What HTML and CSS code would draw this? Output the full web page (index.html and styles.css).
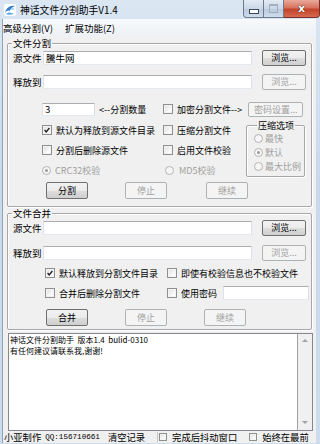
FILE: index.html
```html
<!DOCTYPE html>
<html lang="zh-CN">
<head>
    <meta charset="UTF-8">
    <title>神话文件分割助手V1.4</title>
    <link rel="stylesheet" href="styles.css">
</head>
<body>
<div class="window">
    <div class="titlebar">
        <svg class="app-icon" width="12" height="12" viewBox="0 0 12 12">
            <path d="M1 9 C2 4 6 1 11 2 C8 3 6 5 6 7 C4 6 2 7 1 9 Z" fill="#2f7fd0"/>
            <path d="M2 10 C4 8 7 8 10 10 C7 11 4 11 2 10 Z" fill="#5aa8ea"/>
            <circle cx="8.5" cy="5" r="1.3" fill="#9fd0f5"/>
        </svg>
        <span class="title">神话文件分割助手V1.4</span>
        <div class="caption">
            <span class="cbtn min"><i></i></span>
            <span class="cbtn max"><i></i></span>
            <span class="cbtn close">x</span>
        </div>
    </div>

    <div class="client">
        <div class="menubar">
            <span>高级分割(V)</span>
            <span>扩展功能(Z)</span>
        </div>

        <!-- 文件分割 -->
        <fieldset class="group split">
            <legend>文件分割</legend>
            <div class="row path">
                <span class="lbl">源文件</span>
                <div class="edit wide">騰牛网</div>
                <span class="btn browse">浏览...</span>
            </div>
            <div class="row path gap7">
                <span class="lbl">释放到</span>
                <div class="edit wide"></div>
                <span class="btn browse off">浏览...</span>
            </div>
            <div class="row count">
                <div class="left">
                    <div class="edit spin">3</div>
                    <span class="hint">&lt;--分割数量</span>
                </div>
                <span class="chk"></span><span class="txt">加密分割文件--&gt;</span>
                <span class="btn pwd off">密码设置...</span>
            </div>
            <div class="opts">
                <div class="col leftcol">
                    <div class="opt"><span class="chk on"><svg viewBox="0 0 10 10"><path d="M2 5 L4 7.5 L8 2.5" fill="none" stroke="#1c1c1c" stroke-width="1.6"/></svg></span><span class="txt">默认为释放到源文件目录</span></div>
                    <div class="opt"><span class="chk"></span><span class="txt">分割后删除源文件</span></div>
                    <div class="opt off"><span class="radio on"></span><span class="txt">CRC32校验</span></div>
                </div>
                <div class="col midcol">
                    <div class="opt"><span class="chk"></span><span class="txt">压缩分割文件</span></div>
                    <div class="opt"><span class="chk"></span><span class="txt">启用文件校验</span></div>
                    <div class="opt off"><span class="radio"></span><span class="txt">MD5校验</span></div>
                </div>
                <fieldset class="group zip">
                    <legend>压缩选项</legend>
                    <div class="ropt"><span class="radio"></span><span class="txt">最快</span></div>
                    <div class="ropt"><span class="radio on"></span><span class="txt">默认</span></div>
                    <div class="ropt"><span class="radio"></span><span class="txt">最大比例</span></div>
                </fieldset>
            </div>
            <div class="row actions">
                <span class="btn act">分割</span>
                <span class="btn act off stop">停止</span>
                <span class="btn act off cont">继续</span>
            </div>
        </fieldset>

        <!-- 文件合并 -->
        <fieldset class="group merge">
            <legend>文件合并</legend>
            <div class="row path">
                <span class="lbl">源文件</span>
                <div class="edit wide"></div>
                <span class="btn browse">浏览...</span>
            </div>
            <div class="row path gap8">
                <span class="lbl">释放到</span>
                <div class="edit wide"></div>
                <span class="btn browse off">浏览...</span>
            </div>
            <div class="row mopt first">
                <div class="mleft"><span class="chk on"><svg viewBox="0 0 10 10"><path d="M2 5 L4 7.5 L8 2.5" fill="none" stroke="#1c1c1c" stroke-width="1.6"/></svg></span><span class="txt">默认释放到分割文件目录</span></div>
                <span class="chk"></span><span class="txt">即使有校验信息也不校验文件</span>
            </div>
            <div class="row mopt">
                <div class="mleft"><span class="chk"></span><span class="txt">合并后删除分割文件</span></div>
                <span class="chk"></span><span class="txt">使用密码</span>
                <div class="edit pass"></div>
            </div>
            <div class="row actions m">
                <span class="btn act">合并</span>
                <span class="btn act off stop">停止</span>
                <span class="btn act off cont2">继续</span>
            </div>
        </fieldset>

        <div class="log">
            <div class="log-text">
                <div>神话文件分割助手&nbsp; 版本1.4&nbsp; bulid-0310</div>
                <div>有任何建议请联系我,谢谢!</div>
            </div>
            <div class="vscroll">
                <span class="arr up"></span>
                <span class="arr down"></span>
            </div>
        </div>

        <div class="statusbar">
            <span class="st-name">小亚制作</span>
            <span class="st-qq">QQ:156710661</span>
            <span class="st-clear">清空记录</span>
            <span class="st-sep"></span>
            <span class="chk"></span><span class="txt">完成后抖动窗口</span>
            <span class="chk st-top"></span><span class="txt">始终在最前</span>
        </div>
    </div>
</div>
</body>
</html>
```

FILE: styles.css
```css
body {
    margin: 0;
    font-family: "Noto Sans CJK SC", "Noto Sans", sans-serif;
    font-size: 9px;
    color: #000;
}
.window {
    width: 320px;
    height: 444px;
    box-sizing: border-box;
    padding: 0 4px 4px 2px;
    background: linear-gradient(180deg, #dae6f2 0%, #c9d9ea 40%, #cddcec 100%);
    display: flex;
    flex-direction: column;
    overflow: hidden;
}
.titlebar {
    height: 19px;
    flex: none;
    display: flex;
    align-items: center;
    position: relative;
}
.app-icon {
    margin-left: 2px;
    background: #fff;
    border-radius: 2px;
}
.title {
    margin-left: 4px;
    font-size: 9.8px;
    line-height: 12px;
    color: #000;
}
.caption {
    position: absolute;
    right: -4px;
    top: 0;
    display: flex;
}
.cbtn {
    height: 18px;
    box-sizing: border-box;
    border: 1px solid #6b7a8f;
    border-top: none;
    display: flex;
    align-items: center;
    justify-content: center;
    background: linear-gradient(180deg, #e3ebf4 0%, #cbd8e7 50%, #b8c9dc 51%, #cfdceb 100%);
}
.cbtn.min {
    width: 21px;
    border-radius: 0 0 0 4px;
}
.cbtn.min i {
    width: 8px;
    height: 3px;
    margin-top: 5px;
    background: #fff;
    border: 1px solid #3b4a5e;
}
.cbtn.max {
    width: 20px;
    border-left: none;
}
.cbtn.max i {
    width: 7px;
    height: 6px;
    border: 1px solid #8d9bb0;
    border-top-width: 2px;
    opacity: 0.7;
}
.cbtn.close {
    width: 36px;
    border-left: none;
    border-color: #7a2f2a;
    border-radius: 0 0 4px 0;
    background: linear-gradient(180deg, #e9a99c 0%, #d7735f 45%, #c2432c 55%, #d66a4e 100%);
    color: #fff;
    font-family: "DejaVu Sans", sans-serif;
    font-weight: bold;
    font-size: 11px;
    text-shadow: 0 0 1px #3a0d08, 0 0 1px #3a0d08;
}
.client {
    flex: 1;
    background: #f0f0f0;
    border-left: 1px solid #8fa2b8;
    display: flex;
    flex-direction: column;
}
.menubar {
    height: 17px;
    flex: none;
    display: flex;
    align-items: center;
    gap: 12px;
    font-size: 9.5px;
    background: linear-gradient(180deg, #f7f9fb 0%, #eef1f5 100%);
}
.group {
    margin: 2px 4px 0 4px;
    padding: 0;
    border: 1px solid #a7a7a7;
    border-radius: 2px;
    box-shadow: 1px 1px 0 #fff, inset 1px 1px 0 #fff;
    min-width: 0;
}
.group legend {
    padding: 0 1px;
    margin-left: 4px;
    line-height: 11px;
    font-size: 9.5px;
}
.row {
    display: flex;
    align-items: center;
    height: 17px;
}
.row.path {
    padding-left: 5px;
}
.gap7 { margin-top: 7px; }
.gap8 { margin-top: 8px; }
.lbl {
    width: 30px;
    font-size: 9.5px;
}
.edit {
    box-sizing: border-box;
    height: 14px;
    background: #fff;
    border: 1px solid #abadb3;
    border-color: #abadb3 #dbdfe6 #e3e9ef #e2e3ea;
    line-height: 12px;
    padding-left: 2px;
    font-size: 9.5px;
}
.edit.wide {
    width: 209px;
}
.btn {
    box-sizing: border-box;
    display: flex;
    align-items: center;
    justify-content: center;
    height: 16px;
    border: 1px solid #707070;
    border-radius: 2px;
    background: linear-gradient(180deg, #f2f2f2 0%, #ebebeb 50%, #dddddd 51%, #cfcfcf 100%);
}
.btn.off {
    border-color: #adb2b5;
    background: #f4f4f4;
    color: #a0a0a0;
}
.btn.browse {
    width: 44px;
    margin-left: 10px;
}
.row.count {
    margin-top: 11px;
    height: 16px;
}
.left {
    width: 155px;
    display: flex;
    align-items: center;
    padding-left: 34px;
    box-sizing: border-box;
}
.edit.spin {
    width: 53px;
    height: 13px;
    line-height: 11px;
}
.hint {
    margin-left: 4px;
}
.chk {
    box-sizing: border-box;
    width: 10px;
    height: 10px;
    flex: none;
    border: 1px solid #8e8f8f;
    background: linear-gradient(135deg, #dcdcdc 0%, #fbfbfb 70%);
    box-shadow: inset 0 0 0 1px #f4f4f4;
    display: flex;
}
.chk svg {
    width: 8px;
    height: 8px;
}
.txt {
    margin-left: 4px;
    white-space: nowrap;
}
.btn.pwd {
    width: 55px;
    margin-left: 6px;
    height: 15px;
}
.opts {
    display: flex;
    align-items: flex-start;
    margin-top: 5px;
}
.col {
    display: flex;
    flex-direction: column;
    gap: 4px;
}
.leftcol {
    width: 155px;
    padding-left: 34px;
    box-sizing: border-box;
}
.midcol {
    width: 83px;
}
.opt {
    height: 16px;
    display: flex;
    align-items: center;
}
.opt.off {
    color: #a0a0a0;
}
.midcol .opt.off .radio {
    margin-left: 2px;
}
.opt.off .txt {
    margin-left: 5px;
}
.leftcol .opt.off .txt {
    margin-left: 4px;
}
.radio {
    box-sizing: border-box;
    width: 9px;
    height: 9px;
    flex: none;
    border: 1px solid #b4b4b4;
    border-radius: 50%;
    background: #f6f6f6;
    display: flex;
    align-items: center;
    justify-content: center;
}
.radio.on::after {
    content: "";
    width: 3px;
    height: 3px;
    border-radius: 50%;
    background: #9a9a9a;
}
.group.zip {
    margin: -2px 0 0 0;
    width: 59px;
    box-sizing: border-box;
    padding: 0 0 3px 7px;
    color: #a0a0a0;
}
.group.zip legend {
    color: #000;
    margin-left: 3px;
    font-size: 9px;
}
.ropt {
    height: 14px;
    display: flex;
    align-items: center;
}
.ropt .txt {
    margin-left: 2px;
}
.row.actions {
    margin-top: 4px;
    padding-left: 38px;
    margin-bottom: 7px;
}
.btn.act {
    width: 42px;
    height: 17px;
}
.btn.stop {
    margin-left: 37px;
}
.btn.cont {
    margin-left: 39px;
}
.btn.cont2 {
    margin-left: 37px;
}
.group.merge {
    margin-top: 1px;
}
.row.mopt {
    height: 16px;
    margin-top: 4px;
}
.mleft {
    width: 159px;
    padding-left: 37px;
    box-sizing: border-box;
    display: flex;
    align-items: center;
}
.edit.pass {
    width: 86px;
    margin-left: 6px;
    height: 14px;
}
.row.actions.m {
    margin-top: 8px;
    margin-bottom: 3px;
}
.log {
    margin: 3px 3px 0 5px;
    height: 96px;
    flex: none;
    display: flex;
    border: 1px solid #828790;
    background: #fff;
}
.log-text {
    flex: 1;
    padding: 1px 0 0 1px;
    font-size: 8px;
    line-height: 10.5px;
    border-right: 1px solid #a0a0a0;
}
.vscroll {
    width: 14px;
    background: #f0f0f0;
    display: flex;
    flex-direction: column;
    justify-content: space-between;
    align-items: center;
    padding: 5px 0 6px;
}
.arr {
    width: 0;
    height: 0;
    border-left: 3px solid transparent;
    border-right: 3px solid transparent;
}
.arr.up {
    border-bottom: 3px solid #a0a0a0;
}
.arr.down {
    border-top: 3px solid #a0a0a0;
}
.statusbar {
    height: 12px;
    display: flex;
    align-items: center;
    padding-left: 1px;
    font-size: 9.3px;
}
.st-qq {
    margin-left: 4px;
    font-family: "Liberation Mono", "DejaVu Sans Mono", monospace;
    font-size: 7.6px;
}
.st-clear {
    margin-left: 8px;
}
.st-sep {
    width: 1px;
    height: 10px;
    margin-left: 12px;
    margin-right: 1px;
    background: #c8c8c8;
}
.statusbar .chk {
    width: 8px;
    height: 8px;
}
.statusbar .txt {
    margin-left: 5px;
}
.st-top {
    margin-left: 12px;
}
```
